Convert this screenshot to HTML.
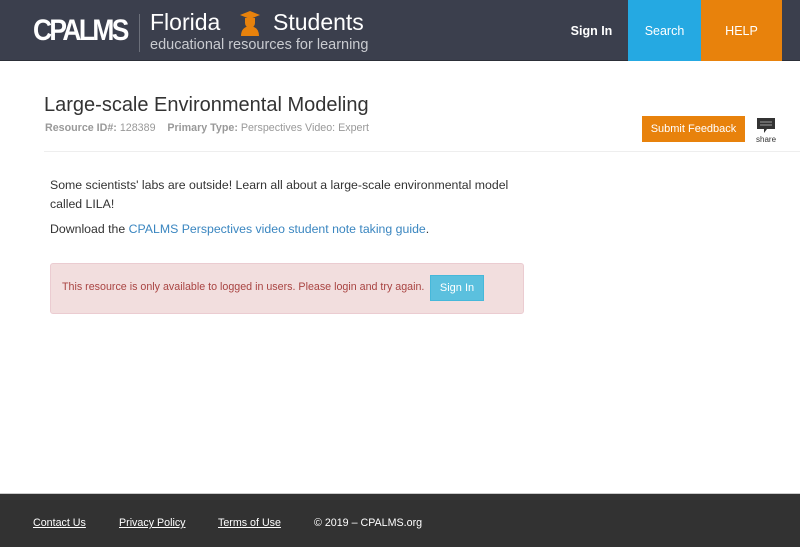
<!DOCTYPE html>
<html><head><meta charset="utf-8"><style>
*{margin:0;padding:0;box-sizing:border-box}
body{width:800px;height:550px;overflow:hidden;background:#fff;font-family:"Liberation Sans",sans-serif;position:relative}
.hdr{position:absolute;left:0;top:0;width:800px;height:61px;background:#3b3f4d;border-bottom:1px solid #2c2f38}
.logo{position:absolute;left:33px;top:14px;color:#fff;font:bold 30px/34px "Liberation Sans",sans-serif;letter-spacing:-3px;transform:scaleX(.88);transform-origin:left}
.sep{position:absolute;left:139px;top:14px;width:1px;height:38px;background:#6b6f7a}
.fl{position:absolute;left:150px;top:9px;color:#fff;font-size:23px}
.st{position:absolute;left:273px;top:9px;color:#fff;font-size:23px}
.sub{position:absolute;left:150px;top:37px;color:#c9cbd0;font-size:14.5px}
.nav{position:absolute;top:0;height:61px;line-height:62px;color:#fff;font-size:12.5px;text-align:center}
.c{position:absolute;color:#333}
a{color:#3a86c0;text-decoration:none}
.ftr{position:absolute;left:0;top:493px;width:800px;height:54px;background:#323232;border-top:1px solid #ccc}
.ftr span{position:absolute;top:23px;color:#fff;font-size:10.7px;text-decoration:underline}
</style></head><body>
<div class="hdr">
<div class="logo">CPALMS</div>
<div class="sep"></div>
<div class="fl">Florida</div>
<svg style="position:absolute;left:238px;top:10px" width="24" height="26" viewBox="0 0 24 26"><path d="M2 5 L12 1 L22 5 L12 9Z M7 8 h10 v5 a5 5 0 0 1 -10 0Z M3 26 q0 -9 9 -10 q9 1 9 10Z" fill="#e8820c"/></svg>
<div class="st">Students</div>
<div class="sub">educational resources for learning</div>
<div class="nav" style="left:555px;width:73px;font-weight:bold">Sign In</div>
<div class="nav" style="left:628px;width:73px;background:#25a9e2">Search</div>
<div class="nav" style="left:701px;width:81px;background:#e8820c">HELP</div>
</div>
<div class="c" style="left:44px;top:94px;font-size:20px;color:#333">Large-scale Environmental Modeling</div>
<div class="c" style="left:45px;top:122px;font-size:10.7px;color:#999"><b>Resource ID#:</b> 128389 &nbsp;&nbsp; <b>Primary Type:</b> Perspectives Video: Expert</div>
<div style="position:absolute;left:642px;top:116px;width:103px;height:26px;background:#e8820c;color:#fff;font-size:11px;line-height:26px;text-align:center">Submit Feedback</div>
<svg style="position:absolute;left:756px;top:117px" width="20" height="17" viewBox="0 0 20 17"><path d="M1 1h18v11h-8l-3 4v-4H1Z" fill="#333"/><path d="M4 5h12M4 8h12" stroke="#888" stroke-width="1.2"/></svg>
<div class="c" style="left:756px;top:135px;font-size:8px;color:#333">share</div>
<div style="position:absolute;left:44px;top:151px;width:756px;height:1px;background:#eee"></div>
<div class="c" style="left:50px;top:176px;width:480px;font-size:12.3px;line-height:19px">Some scientists' labs are outside! Learn all about a large-scale environmental model called LILA!</div>
<div class="c" style="left:50px;top:222px;font-size:12.3px">Download the <a>CPALMS Perspectives video student note taking guide</a>.</div>
<div style="position:absolute;left:50px;top:263px;width:474px;height:51px;background:#f2dede;border:1px solid #ebccd1;border-radius:3px"></div>
<div class="c" style="left:62px;top:281px;font-size:10.7px;color:#a94442">This resource is only available to logged in users. Please login and try again.</div>
<div style="position:absolute;left:430px;top:275px;width:54px;height:26px;background:#5bc0de;border:1px solid #46b8da;color:#fff;font-size:11px;line-height:25px;text-align:center">Sign In</div>
<div class="ftr">
<span style="left:33px">Contact Us</span>
<span style="left:119px">Privacy Policy</span>
<span style="left:218px">Terms of Use</span>
<span style="left:314px;text-decoration:none">&#169; 2019 – CPALMS.org</span>
</div>
</body></html>
